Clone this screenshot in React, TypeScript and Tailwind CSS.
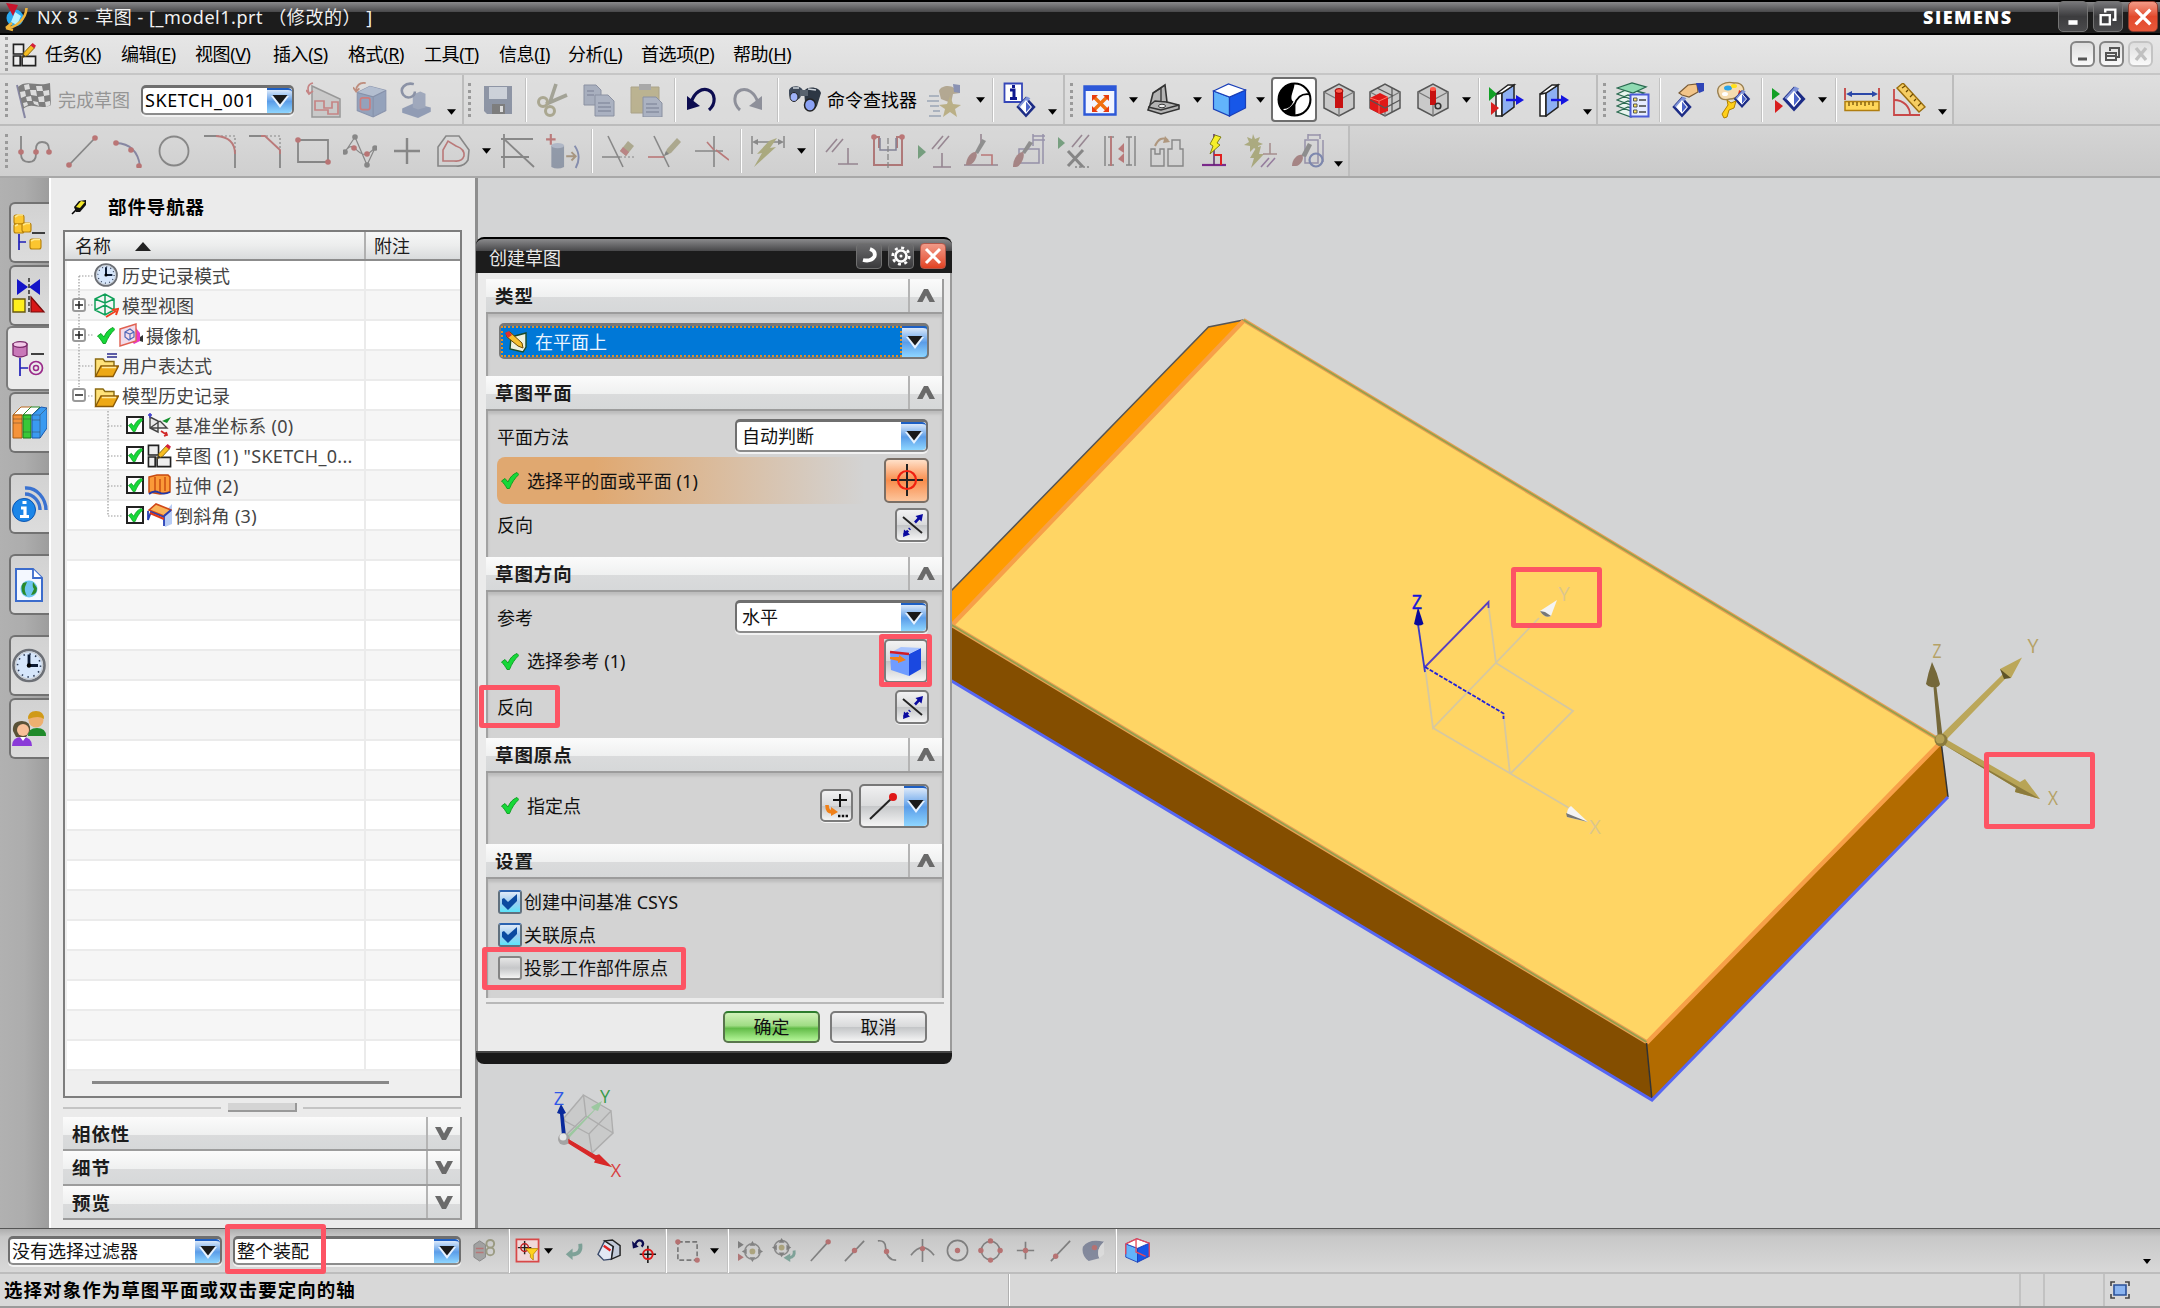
import React from 'react';

type Kids = { children?: React.ReactNode; className?: string };

/* ---------- shared primitives ---------- */

function Ico({ children, className = 'w-[34px] h-[34px]', box = '0 0 34 34' }: Kids & { box?: string }) {
  return (
    <svg viewBox={box} className={`shrink-0 ${className}`} fill="none" stroke="none">
      {children}
    </svg>
  );
}

function Cell({ w, children, dim }: { w: string; children?: React.ReactNode; dim?: boolean }) {
  return (
    <div className={`flex h-full shrink-0 items-center justify-center ${w} ${dim ? 'opacity-50' : ''}`}>{children}</div>
  );
}

function Grip({ w = 'w-[12px]' }: { w?: string }) {
  return (
    <div className={`flex h-full shrink-0 items-center justify-center ${w}`}>
      <div className="h-[34px] border-l-[3px] border-dotted border-[#9a9a9a]" />
    </div>
  );
}

function Sep({ w = 'w-[8px]' }: { w?: string }) {
  return (
    <div className={`flex h-full shrink-0 items-center justify-center ${w}`}>
      <div className="h-[44px] w-[2px] border-l border-[#c2c2c2] bg-white" />
    </div>
  );
}

function Arrow({ w = 'w-[20px]', low }: { w?: string; low?: boolean }) {
  return (
    <div className={`flex h-full shrink-0 justify-center ${low ? 'items-end pb-[9px]' : 'items-center'} ${w}`}>
      <svg viewBox="0 0 10 6" className="h-[6px] w-[9px]">
        <path d="M0 0H10L5 6Z" fill="#000" />
      </svg>
    </div>
  );
}

function DropBtn({ className = 'w-[25px]' }: { className?: string }) {
  return (
    <div
      className={`flex h-full shrink-0 items-center justify-center rounded-r-[4px] border-t-2 border-[#1d5fc4] bg-linear-to-b from-[#dbe8f8] via-[#5b9de8] to-[#8fd6ff] ${className}`}
    >
      <svg viewBox="0 0 18 13" className="h-[13px] w-[18px]">
        <path d="M0 1H18L9 13Z" fill="#e6f2ff" />
        <path d="M1.500 0H16.500L9 9.500Z" fill="#1a1a1a" />
      </svg>
    </div>
  );
}

function Combo({ text, className = '' }: { text: string; className?: string }) {
  return (
    <div
      className={`flex shrink-0 overflow-hidden rounded-[5px] border-2 border-t-[3px] border-[#6f6f6f] border-b-[#8c8c8c] bg-white shadow-[0_2px_0_#f2f2f2] ${className}`}
    >
      <div className="flex flex-1 items-center pl-[2px] whitespace-nowrap">{text}</div>
      <DropBtn />
    </div>
  );
}

/* ---------- reusable shapes ---------- */

const dot = (x: number, y: number, c = '#a01818', r = 2.8) => <circle cx={x} cy={y} r={r} fill={c} />;

function Clock({ className }: { className?: string }) {
  return (
    <Ico className={className} box="0 0 34 34">
      <circle cx="17" cy="17" r="15.500" fill="#d6e6fb" stroke="#6d7076" strokeWidth="2.600" />
      <circle cx="17" cy="17" r="13.500" stroke="#c9ccd0" strokeWidth="1.200" />
      <circle cx="17" cy="17" r="11.500" stroke="#2d3b55" strokeWidth="1.600" strokeDasharray="1.500 4.520" />
      <path d="M17 6V17H26" stroke="#0c1a33" strokeWidth="2.800" />
      <circle cx="17" cy="17" r="2.200" fill="#000" />
    </Ico>
  );
}

function SketchIcon({ className }: { className?: string }) {
  return (
    <Ico className={className} box="0 0 26 26">
      <g fill="#eee" stroke="#222" strokeWidth="1.700">
        <path d="M1.500 2.500H12V12.500H1.500Z M1.500 14.500H8.500V24.500H1.500Z M10.500 15H24.500V24.500H10.500Z" />
      </g>
      <path d="M11 16L12.500 11L20 3L23.500 6L16 14Z" fill="#f6bd22" stroke="#7c5a00" strokeWidth="0.900" />
      <path d="M19 3.500L21.500 1L25 4L23 6.500Z" fill="#d4213c" />
      <path d="M11 16L12 12.700L14.300 15Z" fill="#333" />
    </Ico>
  );
}

function Folder({ marks }: { marks?: boolean }) {
  return (
    <Ico className="h-[26px] w-[25px]" box="0 0 25 26">
      {marks && <path d="M13 2H23M13 5H23" stroke="#2a2a8c" strokeWidth="1.600" />}
      <path d="M1.500 24V7H9L11 9.500H20V14" fill="#ffe27a" stroke="#8a6a10" strokeWidth="1.400" />
      <path d="M1.500 24.500L7 14H24.500L19 24.500Z" fill="#eda815" stroke="#8a5a08" strokeWidth="1.400" />
      <path d="M8 15.500H22" stroke="#ffe9a0" strokeWidth="1.500" />
    </Ico>
  );
}

function Check({ className = 'w-[18px] h-[17px]' }: { className?: string }) {
  return (
    <svg viewBox="0 0 18 17" className={`shrink-0 ${className}`}>
      <path d="M0.500 9L4 6.500L7 10C9 5 12 2 16 0.500L17.800 2.500C13.500 6.500 11 10.500 8.500 16.500H6C4.500 13.500 2.500 11 0.500 9Z" fill="#16d838" stroke="#0a9a1e" strokeWidth="0.900" />
    </svg>
  );
}

function WireCube({ children }: Kids) {
  return (
    <Ico>
      <path d="M2 9L17 1L32 9V25L17 33L2 25Z" fill="#c9c9c9" stroke="#555" strokeWidth="1.500" />
      <path d="M2 9L17 17L32 9M17 17V33" stroke="#777" strokeWidth="1.300" />
      {children}
    </Ico>
  );
}

function BlueCube({ className, edges }: { className?: string; edges?: boolean }) {
  return (
    <Ico className={className}>
      <path d="M1 8L17 14V33L1 26Z" fill="#62b4fb" stroke="#1a3fb8" strokeWidth="1.200" />
      <path d="M17 14L33 7V25L17 33Z" fill="#1757e8" stroke="#1a3fb8" strokeWidth="1.200" />
      <path d="M1 8L16 1L33 7L17 14Z" fill="#fff" stroke="#1a3fb8" strokeWidth="1.200" />
      {edges && <path d="M1 8L16 1L33 7V25M15 1V19L28 25M1 8V22" stroke="#e84858" strokeWidth="1.800" />}
    </Ico>
  );
}

function Diamond({ x, y, s = 1 }: { x: number; y: number; s?: number }) {
  return (
    <g transform={`translate(${x} ${y}) scale(${s})`}>
      <path d="M-11 0L0 -12L11 0L0 12Z" fill="#1c2c86" />
      <path d="M-9 -1L1 -12L5 -10L-5 2Z" fill="#7f93d8" />
      <path d="M-6 0L0 -7V7Z" fill="#fff" />
      <path d="M6 0L0 -7V7Z" fill="#4a63c8" />
      <path d="M-6 0L0 -7L6 0L0 7Z" stroke="#fff" strokeWidth="1.200" />
    </g>
  );
}

/* ---------- title bar & menu ---------- */

function WinBtn({ red, children }: Kids & { red?: boolean }) {
  return (
    <div
      className={`flex h-[31px] w-[30px] items-center justify-center rounded-[5px] border ${
        red
          ? 'border-[#8c3a2c] bg-linear-to-b from-[#f39a86] via-[#e2492c] to-[#e8583a]'
          : 'border-[#747474] bg-linear-to-b from-[#77777a] via-[#3c3c3e] to-[#4a4a4c]'
      }`}
    >
      <svg viewBox="0 0 24 24" className="h-[22px] w-[22px]" fill="none" stroke="#fff" strokeWidth="3">
        {children}
      </svg>
    </div>
  );
}

function TitleBar() {
  return (
    <div className="flex h-[35px] items-center border-b-2 border-black bg-[linear-gradient(#000_0,#000_2px,#8a8a8c_2px,#48484a_12px,#1c1c1c_12px,#1c1c1c_100%)] text-[18px] leading-none text-[#f1f1f1]">
      <Ico className="ml-[4px] h-[32px] w-[25px]" box="0 0 25 32">
        <circle cx="11" cy="17" r="8.500" fill="#2aa9f0" />
        <path d="M11 11L17 15L13 24L7 21Z" fill="#b8f1ff" />
        <path d="M2 2L14 4L9 15Z" fill="#c8142c" />
        <path d="M2 27C12 27 22 18 22.500 7M2 27L8 22M2 27L9 29" stroke="#f0b43a" strokeWidth="2.600" />
      </Ico>
      <div className="ml-[8px] pt-px whitespace-pre tracking-[0.540px]">NX 8 - 草图 - [_model1.prt （修改的） ]</div>
      <div className="ml-auto mr-[42px] w-[93px] font-['Open_Sans'] text-[18px] font-extrabold tracking-[1.500px] text-white">SIEMENS</div>
      <div className="flex gap-[5px] pr-[2px]">
        <WinBtn>
          <path d="M7 18H17" strokeWidth="5" />
        </WinBtn>
        <WinBtn>
          <path d="M9 7V4H20V15H17M4 10H14V20H4Z" strokeWidth="2.600" />
        </WinBtn>
        <WinBtn red>
          <path d="M4 4L20 20M20 4L4 20" strokeWidth="3.600" />
        </WinBtn>
      </div>
    </div>
  );
}

const menus = [
  ['任务', 'K', 'w-[76px]'],
  ['编辑', 'E', 'w-[74px]'],
  ['视图', 'V', 'w-[78px]'],
  ['插入', 'S', 'w-[75px]'],
  ['格式', 'R', 'w-[76px]'],
  ['工具', 'T', 'w-[75px]'],
  ['信息', 'I', 'w-[69px]'],
  ['分析', 'L', 'w-[73px]'],
  ['首选项', 'P', 'w-[92px]'],
  ['帮助', 'H', 'w-[80px]'],
];

function MdiBtn({ dim, children }: Kids & { dim?: boolean }) {
  return (
    <div
      className={`flex h-[26px] w-[25px] items-center justify-center rounded-[6px] border-2 bg-linear-to-b from-[#dedede] to-[#fafafa] ${
        dim ? 'border-[#c4c4c4]' : 'border-[#848484]'
      }`}
    >
      <svg viewBox="0 0 20 20" className="h-[20px] w-[20px] shrink-0" fill="none" stroke={dim ? '#c0c0c0' : '#555'} strokeWidth="2">
        {children}
      </svg>
    </div>
  );
}

function MenuBar() {
  return (
    <div className="flex h-[40px] items-center border-b-2 border-[#c6c6c6] bg-linear-to-b from-[#e6e6e6] to-[#dedede] text-[18px] leading-none text-black">
      <Grip w="w-[12px]" />
      <SketchIcon className="h-[25px] w-[25px]" />
      <div className="ml-[8px] flex">
        {menus.map(([t, k, w]) => (
          <div key={k} className={`${w} whitespace-nowrap tracking-[-0.400px]`}>
            {t}(<span className="underline underline-offset-2">{k}</span>)
          </div>
        ))}
      </div>
      <div className="ml-auto flex gap-[4px] pr-[7px]">
        <MdiBtn>
          <path d="M5 15H14" strokeWidth="3" />
        </MdiBtn>
        <MdiBtn>
          <path d="M8 7V4H17V13H14M4 9H14V16H4ZM4 12H14" />
        </MdiBtn>
        <MdiBtn dim>
          <path d="M5 4L15 16M15 4L5 16" strokeWidth="3.400" />
        </MdiBtn>
      </div>
    </div>
  );
}

/* ---------- toolbar 1 ---------- */

function Toolbar1() {
  return (
    <div className="flex h-[51px] items-center border-b-2 border-[#bcbcbc] text-[18px] leading-none">
      <div className="flex h-full w-[464px] items-center border-r-2 border-[#bdbdbd] bg-[#dedede]/60">
        <Grip />
        <Cell w="w-[44px]" dim>
          <Ico className="h-[38px] w-[36px]" box="0 0 36 38">
            <path d="M1 4L9 37" stroke="#33336a" strokeWidth="2" />
            <path d="M2 6C10 -2 20 6 34 2L35 24C24 30 16 20 7 28Z" fill="#222" />
            <g fill="#ddd">
              <path d="M8 4L13 3L14 8L9 9ZM20 5L26 5L27 10L21 10ZM14 9L20 9L21 15L15 14ZM27 10L33 9L33.500 14L28 15ZM4 11L9 10L10 15L5 17ZM10 16L15 15L16 20L11 20ZM22 16L28 15L28.500 21L23 21ZM7 22L11 21L12 24L8 26ZM17 20L22 21L23 25L18 23ZM29 21L34 20L34.500 24L30 26Z" />
            </g>
          </Ico>
        </Cell>
        <div className="ml-[2px] w-[84px] whitespace-nowrap text-[#959595]">完成草图</div>
        <Combo text="SKETCH_001" className="h-[30px] w-[153px] text-[18px] tracking-[0.600px]" />
        <Cell w="w-[53px]" dim>
          <Ico className="ml-[7px] h-[36px] w-[36px]" box="0 0 36 36">
            <path d="M6 4L34 17V35H6Z" fill="#b8b8b8" stroke="#555" strokeWidth="1.500" />
            <path d="M9 19H18V26H26V20H32V32H22V28H9Z" stroke="#b03030" strokeWidth="1.700" />
            <path d="M7 1C2 2 1 6 3 11M0 8L3 12L7 9" stroke="#b03030" strokeWidth="1.700" />
          </Ico>
        </Cell>
        <Cell w="w-[47px]" dim>
          <Ico className="h-[36px] w-[36px]">
            <path d="M4 10L16 4L31 8V27L19 33L4 27Z" fill="#4f6a9c" stroke="#3b4f80" />
            <path d="M4 10L16 4L31 8L19 14Z" fill="#8ba0c4" />
            <path d="M4 10L19 14L31 8M19 14V33" stroke="#324878" />
            <rect x="7" y="15" width="9" height="11" rx="2" stroke="#c02020" strokeWidth="1.600" />
            <path d="M12 1C6 0 3 4 3 8M0 5L3 9L6 6" stroke="#a04020" strokeWidth="1.700" />
          </Ico>
        </Cell>
        <Cell w="w-[46px]" dim>
          <Ico className="h-[36px] w-[36px]">
            <path d="M3 25L14 20L30 24V28L18 34L3 29Z" fill="#4a5f8e" />
            <path d="M13 12L20 9L25 11V24L18 26L13 24Z" fill="#64769d" />
            <path d="M14 2C6 0 0 6 4 12C8 17 15 14 15 9" stroke="#3b4a70" strokeWidth="2.400" />
          </Ico>
        </Cell>
        <Arrow w="w-[22px]" low />
      </div>

      <div className="flex h-full w-[601px] items-center border-r-2 border-[#bdbdbd] bg-[#dedede]/60">
        <Grip w="w-[11px]" />
        <Cell w="w-[46px]" dim>
          <Ico className="h-[30px] w-[30px]" box="0 0 30 30">
            <path d="M1 1H29V29H4L1 26Z" fill="#41506f" />
            <path d="M6 2H24V14H6Z" fill="#bcc6d6" />
            <path d="M9 19H22V29H9Z" fill="#222" />
            <path d="M17 21H20V27H17Z" fill="#ddd" />
          </Ico>
        </Cell>
        <Sep w="w-[9px]" />
        <Cell w="w-[46px]" dim>
          <Ico>
            <path d="M20 1L14 19M31 12L10 21" stroke="#6a6a52" strokeWidth="3.600" />
            <circle cx="7" cy="19" r="4.500" stroke="#7a7448" strokeWidth="3" />
            <circle cx="14" cy="28" r="4.500" stroke="#7a7448" strokeWidth="3" />
          </Ico>
        </Cell>
        <Cell w="w-[46px]" dim>
          <Ico>
            <path d="M2 2H14L19 7V22H2Z" fill="#7482a0" stroke="#3c4868" />
            <path d="M13 12H26L32 18V33H13Z" fill="#7b89a8" stroke="#3c4868" />
            <path d="M16 20H28M16 24H29M16 28H29M5 8H12M5 12H12" stroke="#39456a" strokeWidth="1.500" />
          </Ico>
        </Cell>
        <Cell w="w-[48px]" dim>
          <Ico>
            <path d="M2 4H30V30H2Z" fill="#9b8a48" stroke="#7a6c38" />
            <path d="M10 1H22V7H10Z" fill="#777" />
            <path d="M14 14H27L33 20V34H14Z" fill="#7b89a8" stroke="#3c4868" />
            <path d="M17 21H28M17 25H30M17 29H30" stroke="#39456a" strokeWidth="1.500" />
          </Ico>
        </Cell>
        <Sep w="w-[10px]" />
        <Cell w="w-[42px]">
          <Ico className="h-[28px] w-[30px]" box="0 0 30 28">
            <path d="M5 17C8 6 16 2 22 4C30 7 30 18 23 24" stroke="#0c0c50" strokeWidth="3.200" />
            <path d="M1 10L14 20L1 24Z" fill="#0c0c50" />
          </Ico>
        </Cell>
        <Cell w="w-[52px]" dim>
          <Ico className="h-[28px] w-[30px]" box="0 0 30 28">
            <path d="M25 17C22 6 14 2 8 4C0 7 0 18 7 24" stroke="#42465a" strokeWidth="3" />
            <path d="M29 10L16 20L29 24Z" fill="#42465a" />
          </Ico>
        </Cell>
        <Sep />
        <Cell w="w-[45px]">
          <Ico className="h-[32px] w-[34px]" box="0 0 34 32">
            <path d="M1 6C4 0 14 2 15 7L12 14C8 18 1 15 1 10Z" fill="#3f4a5a" />
            <path d="M16 7C20 1 32 3 33 9L29 22C26 28 16 26 17 18Z" fill="#2d3744" />
            <path d="M12 6H20V12H12Z" fill="#59636f" />
            <ellipse cx="6" cy="13" rx="4" ry="4.500" fill="#9fb2f8" stroke="#222" />
            <ellipse cx="22" cy="21" rx="5.500" ry="6" fill="#8ba2f5" stroke="#222" strokeWidth="1.500" />
            <path d="M5 4L11 4M20 5L28 6" stroke="#d0d6dc" strokeWidth="1.500" />
          </Ico>
        </Cell>
        <div className="w-[90px] whitespace-nowrap text-black">命令查找器</div>
        <Cell w="w-[54px]" dim>
          <Ico>
            <path d="M12 8C14 2 24 2 27 5L32 2L33 10L26 11L24 20L14 16Z" fill="#8a744a" />
            <path d="M26 1L33 2V10L27 9Z" fill="#39498a" />
            <path d="M23 13L26 21L34 22L28 26L30 34L23 29L16 34L18 26L12 22L20 21Z" fill="#9a8534" />
            <path d="M2 13H12M0 18H12M3 23H12M6 28H13M2 33H14" stroke="#5c7290" strokeWidth="1.600" />
          </Ico>
        </Cell>
        <Arrow w="w-[18px]" />
        <Sep />
        <Cell w="w-[46px]">
          <Ico className="h-[36px] w-[34px]" box="0 0 34 36">
            <path d="M1.500 1.500H19V20H1.500Z" fill="#fff" stroke="#3647b8" strokeWidth="1.800" />
            <path d="M7 8H11V16M7 16.500H14M9 4.500H12" stroke="#101a90" strokeWidth="3" />
            <Diamond x={23} y={25} s={0.88} />
          </Ico>
        </Cell>
        <Arrow w="w-[18px]" low />
      </div>

      <div className="flex h-full w-[533px] items-center border-r-2 border-[#bdbdbd] bg-[#dedede]/60">
        <Grip />
        <Cell w="w-[46px]">
          <Ico>
            <path d="M1.500 3.500H32.500V31.500H1.500Z" fill="#f2f5ff" stroke="#2d58d8" strokeWidth="2.400" />
            <path d="M1.500 3H32.500V8H1.500Z" fill="#2d58d8" />
            <path d="M11 14L24 27M24 14L11 27" stroke="#f07010" strokeWidth="3.500" />
            <path d="M9 12H15L9 18ZM26 12H20L26 18ZM9 29H15L9 23ZM26 29H20L26 23Z" fill="#e83c10" />
          </Ico>
        </Cell>
        <Arrow w="w-[20px]" />
        <Cell w="w-[42px]">
          <Ico>
            <path d="M3 22L6 10L18 2L20 19L32 22V26L14 31L1 27Z" fill="#b4b4b4" stroke="#333" strokeWidth="1.600" />
            <path d="M3 22L8 18L20 19M6 10L14 5V18M1 24L14 27L32 22" stroke="#333" strokeWidth="1.300" />
            <ellipse cx="15" cy="23" rx="3.500" ry="1.800" fill="#eee" stroke="#333" />
          </Ico>
        </Cell>
        <Arrow w="w-[24px]" />
        <Cell w="w-[40px]">
          <BlueCube className="h-[34px] w-[35px]" />
        </Cell>
        <Arrow w="w-[22px]" />
        <Cell w="w-[46px]">
          <div className="flex h-[45px] w-[46px] items-center justify-center rounded-[4px] border-2 border-[#6e6e6e] bg-white">
            <Ico className="h-[35px] w-[35px]">
              <circle cx="17" cy="17" r="15.500" fill="#fff" stroke="#000" strokeWidth="2" />
              <path d="M17 1.500A15.500 15.500 0 0 0 4 26C10 27 14 24 16 19C11 16 17 8 17 1.500Z" fill="#000" />
              <path d="M17 32.500V22C20 13 26 11 32 12" stroke="#000" strokeWidth="1.800" />
              <path d="M17 32.500V20C10 28 8 28 5 27Q9 32.500 17 32.500Z" fill="#000" />
            </Ico>
          </div>
        </Cell>
        <Cell w="w-[44px]">
          <WireCube>
            <path d="M13 8V25H21V8Z" fill="#c81010" />
            <ellipse cx="17" cy="8" rx="4" ry="2.400" fill="#ff5a4a" stroke="#900" />
          </WireCube>
        </Cell>
        <Cell w="w-[48px]">
          <WireCube>
            <path d="M2 15L12 10L20 14V28L12 31L2 26Z" fill="#e01818" />
            <path d="M2 15L11 18L20 14M11 18V31" stroke="#ff7060" />
            <path d="M24 5V29M9 5L25 13M2 17L17 25L32 17" stroke="#555" strokeWidth="1.200" />
          </WireCube>
        </Cell>
        <Cell w="w-[48px]">
          <WireCube>
            <path d="M14 6V22H20V6Z" fill="#c81010" />
            <ellipse cx="17" cy="6" rx="3" ry="2" fill="#ff5a4a" />
            <circle cx="22" cy="23" r="2.800" stroke="#333" strokeWidth="1.600" />
          </WireCube>
        </Cell>
        <Arrow w="w-[18px]" />
        <Sep />
        <Cell w="w-[46px]">
          <Ico className="h-[34px] w-[37px]" box="0 0 37 34">
            <path d="M8 11L14 10V33H8Z" fill="#fff" stroke="#222" strokeWidth="1.500" />
            <path d="M14 10L26 2V24L14 33Z" fill="#8eb0f2" stroke="#222" strokeWidth="1.500" />
            <path d="M8 11L20 2H26L14 10Z" fill="#fff" stroke="#222" strokeWidth="1.500" />
            <path d="M1 4L9 11L1 18Z" fill="#12a026" />
            <path d="M3 19L11 25L3 32Z" fill="#d81e1e" />
            <path d="M18 17H29" stroke="#1414e0" strokeWidth="2.400" />
            <path d="M28 12L36 17L28 22Z" fill="#1414e0" />
          </Ico>
        </Cell>
        <Cell w="w-[50px]">
          <Ico className="h-[34px] w-[32px]" box="0 0 32 34">
            <path d="M2 11L8 10V33H2Z" fill="#fff" stroke="#222" strokeWidth="1.500" />
            <path d="M8 10L20 2V24L8 33Z" fill="#8eb0f2" stroke="#222" strokeWidth="1.500" />
            <path d="M2 11L14 2H20L8 10Z" fill="#fff" stroke="#222" strokeWidth="1.500" />
            <path d="M13 17H24" stroke="#1414e0" strokeWidth="2.400" />
            <path d="M23 12L31 17L23 22Z" fill="#1414e0" />
          </Ico>
        </Cell>
        <Arrow w="w-[17px]" low />
      </div>

      <div className="flex h-full w-[356px] items-center border-r-2 border-[#bdbdbd] bg-[#dedede]/60">
        <Grip />
        <Cell w="w-[46px]">
          <Ico className="h-[36px] w-[34px]" box="0 0 34 36">
            <g fill="#e8f4ee" stroke="#2a6a50" strokeWidth="1.300">
              <path d="M1 30L12 25L28 29L15 35ZM1 24L12 19L28 23L15 29ZM1 18L12 13L28 17L15 23ZM1 12L12 7L28 11L15 17Z" />
              <path d="M1 6L16 1L30 5L17 11Z" fill="#8fdab2" />
            </g>
            <path d="M14.500 12.500H32.500V34.500H14.500Z" fill="#e6ecff" stroke="#4c5cd8" strokeWidth="2" />
            <path d="M17.500 16H21V19H17.500ZM17.500 22H21V25H17.500ZM17.500 28H21V31H17.500Z" fill="#ffe65a" stroke="#555" />
            <path d="M23 18H30M23 24H30M23 30H30" stroke="#444" strokeWidth="1.700" />
          </Ico>
        </Cell>
        <Sep />
        <Cell w="w-[47px]">
          <Ico className="h-[36px] w-[35px]" box="0 0 35 36">
            <Diamond x={12} y={25} s={0.88} />
            <path d="M9 11L18 3L27 2L28 10L19 15L12 13Z" fill="#f2c58a" stroke="#7a5a34" strokeWidth="1.200" />
            <path d="M26 1L34 1L34 9L29 11Z" fill="#2f45b8" />
          </Ico>
        </Cell>
        <Cell w="w-[46px]">
          <Ico className="h-[38px] w-[36px]" box="0 0 36 38">
            <path d="M2 12C0 4 10 0 18 2C26 1 30 8 26 12C22 15 20 18 14 18C6 20 3 17 2 12Z" fill="#f6dcb0" stroke="#9a8050" strokeWidth="1.400" />
            <ellipse cx="12" cy="7" rx="4" ry="2.500" fill="#2aa4e8" />
            <ellipse cx="18" cy="5" rx="3" ry="2" fill="#ffe11a" />
            <ellipse cx="9" cy="13" rx="3" ry="2" fill="#fff" />
            <path d="M23 9L28 12L22 14Z" fill="#e02818" />
            <Diamond x={26} y={18} s={0.75} />
            <path d="M8 37L6 33L12 24L11 19L15 22L20 20L18 27L13 29L11 36Z" fill="#ffcf1a" stroke="#b08000" />
          </Ico>
        </Cell>
        <Sep w="w-[10px]" />
        <Cell w="w-[44px]">
          <Ico className="h-[28px] w-[36px]" box="0 0 36 28">
            <path d="M1 2L9 8L1 14Z" fill="#12a026" />
            <path d="M4 14L12 20L4 27Z" fill="#d81e1e" />
            <Diamond x={23} y={13} s={1.05} />
          </Ico>
        </Cell>
        <Arrow w="w-[22px]" />
        <Sep w="w-[6px]" />
        <Cell w="w-[46px]">
          <Ico className="h-[24px] w-[36px]" box="0 0 36 24">
            <path d="M1 0V12M35 0V12" stroke="#c03030" strokeWidth="1.600" />
            <path d="M4 6H32" stroke="#2c48a8" strokeWidth="2" />
            <path d="M2 6L8 3V9ZM34 6L28 3V9Z" fill="#2c48a8" />
            <path d="M1 13.500H35V22.500H1Z" fill="#ffd75a" stroke="#b07e10" strokeWidth="1.500" />
            <path d="M5 14V18M9 14V17M13 14V18M17 14V17M21 14V18M25 14V17M29 14V18" stroke="#6a4800" strokeWidth="1.200" />
          </Ico>
        </Cell>
        <Cell w="w-[48px]">
          <Ico>
            <path d="M2 6V32H28" stroke="#c84848" strokeWidth="1.800" />
            <path d="M2 17C12 17 18 24 18 32" stroke="#c84848" strokeWidth="1.800" />
            <path d="M5 5L11 0L33 24L27 29Z" fill="#f5cd62" stroke="#9a6e10" strokeWidth="1.400" />
            <path d="M10 5L13 3M14 9L16 7M18 14L21 11M22 18L24 16M26 23L29 20" stroke="#6a4800" strokeWidth="1.200" />
          </Ico>
        </Cell>
        <Arrow w="w-[18px]" low />
      </div>
    </div>
  );
}

/* ---------- toolbar 2 ---------- */

const g = '#3c3c3c';

function Toolbar2() {
  return (
    <div className="flex h-[50px] items-center">
      <div className="flex h-full w-[1350px] items-center border-r-2 border-[#bdbdbd] bg-white/10">
        <Grip />
        <Cell w="w-[46px]" dim>
          <Ico>
            <path d="M3 2V20Q3 28 11 28Q18 28 18 20V15Q18 8 24 8Q31 8 31 15V18" stroke={g} strokeWidth="1.800" />
            {dot(3, 18)}{dot(18, 18)}{dot(31, 18)}
          </Ico>
        </Cell>
        <Cell w="w-[47px]" dim>
          <Ico>
            <path d="M4 31L30 4" stroke={g} strokeWidth="1.800" />
            {dot(4, 31)}{dot(30, 4)}
          </Ico>
        </Cell>
        <Cell w="w-[45px]" dim>
          <Ico>
            <path d="M5 9Q26 10 29 32" stroke="#3a3a70" strokeWidth="1.800" />
            {dot(5, 9)}{dot(20, 16)}{dot(28, 32)}
          </Ico>
        </Cell>
        <Cell w="w-[48px]" dim>
          <Ico>
            <circle cx="17" cy="17" r="14.500" stroke={g} strokeWidth="1.800" />
          </Ico>
        </Cell>
        <Cell w="w-[43px]" dim>
          <Ico>
            <path d="M14 2H32V16" stroke={g} strokeWidth="1.200" strokeDasharray="2 2" />
            <path d="M1 2H14M32 16V34" stroke={g} strokeWidth="1.800" />
            <path d="M13 2Q32 3 32 20" stroke="#a02020" strokeWidth="1.800" />
          </Ico>
        </Cell>
        <Cell w="w-[48px]" dim>
          <Ico>
            <path d="M14 2H32V16" stroke={g} strokeWidth="1.200" strokeDasharray="2 2" />
            <path d="M1 2H14M32 16V34" stroke={g} strokeWidth="1.800" />
            <path d="M13 2H17L32 16V20" stroke="#a02020" strokeWidth="1.800" />
          </Ico>
        </Cell>
        <Cell w="w-[48px]" dim>
          <Ico className="h-[30px] w-[36px]" box="0 0 36 30">
            <path d="M3 4H33V26H3Z" stroke={g} strokeWidth="1.800" />
            {dot(3, 4)}{dot(33, 26)}
          </Ico>
        </Cell>
        <Cell w="w-[46px]" dim>
          <Ico>
            <path d="M2 18Q6 10 12 14Q18 22 25 20L32 14M12 3L2 18M12 3L24 31L32 14" stroke={g} strokeWidth="1.200" />
            {dot(12, 3, g)}{dot(2, 18, g)}{dot(32, 14, g)}{dot(24, 31, g)}{dot(11, 14)}{dot(24, 20)}
          </Ico>
        </Cell>
        <Cell w="w-[48px]" dim>
          <Ico>
            <path d="M4 17H30M17 4V30" stroke={g} strokeWidth="2.400" />
          </Ico>
        </Cell>
        <Cell w="w-[44px]" dim>
          <Ico>
            <path d="M2 32V13L10 2H23L33 16L32 26Q28 33 20 32Z" stroke={g} strokeWidth="1.600" />
            <path d="M7 27V16L12 7L20 12Q29 15 28 22Q26 28 18 27Z" stroke="#a02020" strokeWidth="1.600" />
          </Ico>
        </Cell>
        <Arrow w="w-[23px]" />
        <Cell w="w-[40px]" dim>
          <Ico>
            <path d="M3 0V34M0 5H32M0 23H28M3 5L33 33" stroke={g} strokeWidth="1.800" />
          </Ico>
        </Cell>
        <Cell w="w-[50px]" dim>
          <Ico className="h-[36px] w-[36px]">
            <path d="M6 12H18V32Q12 35 6 32Z" fill="#51617f" />
            <ellipse cx="12" cy="12" rx="6" ry="2.500" fill="#8b9ab8" />
            <path d="M1 6H10M5.500 1V11" stroke="#a02020" strokeWidth="2" />
            <path d="M20 22H28M25 18L29 22L25 26" stroke="#7c5a30" strokeWidth="1.800" />
            <path d="M28 12Q35 22 29 33" stroke="#3a4a8a" strokeWidth="1.800" />
          </Ico>
        </Cell>
        <Sep />
        <Cell w="w-[46px]" dim>
          <Ico>
            <path d="M6 2L21 33M0 23H18" stroke={g} strokeWidth="1.600" />
            <path d="M18 23H34" stroke={g} strokeDasharray="2 2" />
            <path d="M18 17L26 7L32 12L24 22Z" fill="#837c4a" />
            <path d="M18 17L21 13L27 18L24 22Z" fill="#a03838" />
          </Ico>
        </Cell>
        <Cell w="w-[46px]" dim>
          <Ico>
            <path d="M6 2L21 33" stroke={g} strokeWidth="1.600" />
            <path d="M0 23H16" stroke="#a02020" strokeWidth="1.600" />
            <path d="M16 22L19 15L29 4L33 8L23 19Z" fill="#837c4a" />
            <path d="M16 22L18 17L21 20Z" fill="#333" />
          </Ico>
        </Cell>
        <Cell w="w-[48px]" dim>
          <Ico>
            <path d="M19 2V33M0 17H28" stroke={g} strokeWidth="1.600" />
            <path d="M12 8L19 16M21 16L34 26" stroke="#a02020" strokeWidth="1.600" />
          </Ico>
        </Cell>
        <Sep w="w-[10px]" />
        <Cell w="w-[44px]" dim>
          <Ico>
            <path d="M1 2V20M33 2V14M3 8H31" stroke={g} strokeWidth="1.500" />
            <path d="M1 8L7 5V11ZM33 8L27 5V11Z" fill={g} />
            <path d="M18 7L26 4L19 14L25 13L3 33L11 19L6 20Z" fill="#82802c" />
          </Ico>
        </Cell>
        <Arrow w="w-[23px]" />
        <Sep w="w-[4px]" />
        <Cell w="w-[48px]" dim>
          <Ico>
            <path d="M2 18L13 5M8 18L19 5M24 14V30M14 30H34" stroke="#5a3a50" strokeWidth="1.600" />
          </Ico>
        </Cell>
        <Cell w="w-[46px]" dim>
          <Ico>
            <path d="M3 3H8V14M26 14V3H31V31H3V3" stroke="#8c2020" strokeWidth="2" />
            <path d="M9 4V16H25V4" stroke="#33335a" strokeWidth="1.500" />
            <path d="M17 4V34" stroke={g} strokeDasharray="6 2" strokeWidth="1.300" />
            {dot(3, 3)}{dot(31, 3)}
          </Ico>
        </Cell>
        <Cell w="w-[46px]" dim>
          <Ico>
            <path d="M1 11L9 18L1 25Z" fill="#1b6a2c" />
            <path d="M15 15L26 2M21 15L32 2M25 19V33M16 33H34" stroke="#5a3a50" strokeWidth="1.600" />
          </Ico>
        </Cell>
        <Cell w="w-[48px]" dim>
          <Ico>
            <path d="M0 31H34M17 0V12" stroke="#5a3a50" strokeWidth="1.600" />
            <path d="M17 21H28V31" stroke="#a02020" strokeWidth="1.600" />
            <path d="M11 18L18 5L22 7L14 20Z" fill="#4a4a4a" />
            <path d="M2 31C2 23 8 17 12 18C15 22 9 31 5 31Z" fill="#7a3a3a" />
          </Ico>
        </Cell>
        <Cell w="w-[46px]" dim>
          <Ico>
            <path d="M8 15V29H28V15ZM22 2H34M22 6H34M22 0V12M32 0V30" stroke="#5a5080" strokeWidth="1.500" />
            <path d="M11 18L18 7L22 9L14 20Z" fill="#4a4a4a" />
            <path d="M2 33C2 25 7 18 12 18C15 22 9 33 5 33Z" fill="#7a3a3a" />
          </Ico>
        </Cell>
        <Cell w="w-[46px]" dim>
          <Ico>
            <path d="M1 3L8 9L1 15Z" fill="#1b6a2c" />
            <path d="M15 13L25 1M22 13L32 1" stroke="#5a3a50" strokeWidth="1.600" />
            <path d="M11 17L26 33M26 16L11 32" stroke={g} strokeWidth="3" />
            <path d="M18 33H34" stroke={g} strokeDasharray="2 2" strokeWidth="1.600" />
          </Ico>
        </Cell>
        <Cell w="w-[47px]" dim>
          <Ico>
            <path d="M1 2V32M31 2V32M7 3V31M25 3V31M4 3H10M4 31H10M22 3H28M22 31H28" stroke={g} strokeWidth="1.500" />
            <path d="M7 2V32" stroke="#a02020" strokeWidth="1.800" />
            <path d="M20 9L14 15L20 19ZM20 19L14 25L20 29Z" fill="#a02020" />
          </Ico>
        </Cell>
        <Cell w="w-[46px]" dim>
          <Ico>
            <path d="M1 15V32H14V15H10V20H5V15ZM18 15V32H33V15H30V6H22V15Z" stroke={g} strokeWidth="1.400" />
            <path d="M5 12Q10 1 18 6" stroke="#8a5a28" strokeWidth="2" />
            <path d="M15 2L20 8L13 9Z" fill="#8a5a28" />
          </Ico>
        </Cell>
        <Cell w="w-[48px]">
          <Ico>
            <path d="M5 31H29" stroke="#7a2a8a" strokeWidth="2.200" />
            <path d="M17 0V31" stroke="#5a2a6a" strokeWidth="1.500" />
            <path d="M17 21H24V31" stroke="#e02020" strokeWidth="2" />
            <path d="M18 1L24 3L20 9L23 11L13 20L16 12L13 10Z" fill="#f6ee2a" stroke="#77770a" strokeWidth="0.900" />
          </Ico>
        </Cell>
        <Cell w="w-[46px]" dim>
          <Ico>
            <path d="M9 0L11 5L16 3L14 8L19 10L14 12L15 17L10 14L6 18L6 12L0 11L5 8L3 3L8 5Z" fill="#82802c" />
            <path d="M12 14L17 12L15 20L20 20L7 34L10 24L6 24Z" fill="#82802c" />
            <path d="M26 9V20M19 20H33" stroke="#7a4a4a" strokeWidth="1.600" />
            <path d="M17 33L25 24M23 33L31 24" stroke="#5a2a6a" strokeWidth="1.600" />
          </Ico>
        </Cell>
        <Cell w="w-[48px]" dim>
          <Ico>
            <path d="M14 6V29H27V6ZM17 1H29M32 6V28M17 0V5M29 0V5" stroke="#5a5080" strokeWidth="1.500" />
            <path d="M10 22L17 9L21 11L15 23Z" fill="#4a4a4a" />
            <path d="M1 32C1 25 7 20 11 21C14 25 9 32 5 32Z" fill="#7a3a3a" />
            <circle cx="25" cy="26" r="6.500" stroke="#2b3f8a" strokeWidth="2.200" />
          </Ico>
        </Cell>
        <Arrow w="w-[13px]" low />
      </div>
    </div>
  );
}

/* ---------- resource tabs ---------- */

function Tab({ mt, active, children }: Kids & { mt: string; active?: boolean }) {
  return (
    <div
      className={`flex shrink-0 items-center justify-center rounded-l-[6px] border-2 border-r-0 pr-[2px] ${mt} ${
        active
          ? 'h-[65px] w-[43px] border-[#7b7b7b] bg-[#ebebeb]'
          : 'h-[61px] w-[40px] border-[#727272] bg-linear-to-b from-[#d2d2d2] to-[#dcdcdc]'
      }`}
    >
      {children}
    </div>
  );
}

function Tabs() {
  return (
    <div className="flex w-[49px] shrink-0 flex-col items-end bg-linear-to-r from-[#b1b1b1] via-[#adadad] to-[#9d9d9d]">
      <Tab mt="mt-[24px]">
        <Ico className="h-[38px] w-[34px]" box="0 0 34 38">
          <g fill="#fcc630" stroke="#b5800a" strokeWidth="1.100">
            <rect x="2" y="1" width="10" height="9" rx="2" />
            <rect x="2" y="10" width="10" height="9" rx="2" />
            <rect x="10" y="9" width="9" height="9" rx="2" />
            <rect x="18" y="25" width="11" height="10" rx="2" />
          </g>
          <path d="M3 3L6 1H11M3 12L6 10.500M11 11L14 9.500H18M19 27L22 25.500H28" stroke="#ffe88a" strokeWidth="1.600" />
          <path d="M7 20V36M7 28H14" stroke="#2020b8" strokeWidth="1.700" />
          <path d="M20 19H33" stroke="#222" strokeWidth="1.700" />
        </Ico>
      </Tab>
      <Tab mt="mt-[2px]">
        <Ico className="h-[38px] w-[34px]" box="0 0 34 38">
          <path d="M5 2L16 10L5 18ZM28 2L17 10L28 18Z" fill="#1414c8" />
          <path d="M17 1V37" stroke="#222" strokeWidth="1.400" strokeDasharray="4 2" />
          <path d="M1 22H13V35H1Z" fill="#ffef1e" stroke="#6a5a10" strokeWidth="1.400" />
          <path d="M19 20L32 35H19Z" fill="#d81818" stroke="#7a0a0a" strokeWidth="1.200" />
        </Ico>
      </Tab>
      <Tab mt="mt-0" active>
        <Ico className="h-[38px] w-[36px]" box="0 0 36 38">
          <path d="M3 4V15Q10 19 17 15V4Z" fill="#c878b8" stroke="#7a2a6a" strokeWidth="1.300" />
          <ellipse cx="10" cy="4.500" rx="7" ry="2.800" fill="#f2c8e8" stroke="#7a2a6a" strokeWidth="1.300" />
          <path d="M10 18V36M10 28H18" stroke="#2020b8" strokeWidth="1.700" />
          <path d="M21 14H34" stroke="#222" strokeWidth="1.700" />
          <circle cx="26" cy="28" r="6.500" stroke="#9a2a8a" strokeWidth="1.700" />
          <circle cx="26" cy="28" r="2.500" stroke="#9a2a8a" strokeWidth="1.500" />
        </Ico>
      </Tab>
      <Tab mt="mt-[1px]">
        <Ico className="h-[34px] w-[35px]" box="0 0 35 34">
          <path d="M1 9L9 1H20L12 9Z" fill="#fff" stroke="#b86a20" />
          <path d="M1 9H10V32H1Z" fill="#f5933a" stroke="#a85a10" />
          <path d="M11 9L19 1H28L20 9Z" fill="#fff" stroke="#2a8a2a" />
          <path d="M11 9H19V32H11Z" fill="#38c838" stroke="#1a7a1a" />
          <path d="M20 9L29 1L35 2V22L28 32H20Z" fill="#3a9af0" stroke="#1a5ab0" />
          <path d="M28 9V32M1 13H10M1 17H10M11 13H19M11 26H19M20 14H28M20 26H28M20 9H28L35 2" stroke="#333" strokeOpacity="0.400" />
        </Ico>
      </Tab>
      <Tab mt="mt-[20px]">
        <Ico className="h-[38px] w-[37px]" box="0 0 37 38">
          <path d="M14 3C26 2 35 14 35 25M14 9C23 9 29 17 29 25M14 15C19 15 23 20 23 26" stroke="#3a72d0" strokeWidth="3.400" />
          <circle cx="13" cy="25" r="11.500" fill="#1c86e8" stroke="#0d55b0" />
          <path d="M11.500 17.500H15.500M10 23H14V31M9 31.500H18" stroke="#fff" strokeWidth="3.200" />
        </Ico>
      </Tab>
      <Tab mt="mt-[20px]">
        <Ico className="h-[36px] w-[30px]" box="0 0 30 36">
          <path d="M2 2H19L28 11V34H2Z" fill="#f4f8ff" stroke="#3c6ccc" strokeWidth="2" />
          <path d="M19 2V11H28" fill="#fff" stroke="#3c6ccc" strokeWidth="1.800" />
          <circle cx="15" cy="22" r="8.500" fill="#6ec4f0" />
          <path d="M9 16Q6 21 9 27L13 29Q10 24 11 20L13 15ZM19 15Q18 20 20 22L17 28Q23 28 23 21Z" fill="#2a8a2a" />
        </Ico>
      </Tab>
      <Tab mt="mt-[20px]">
        <Clock className="h-[35px] w-[34px]" />
      </Tab>
      <Tab mt="mt-[2px]">
        <Ico className="h-[38px] w-[36px]" box="0 0 36 38">
          <path d="M17 26Q17 18 26 18Q35 18 35 26Z" fill="#1f8a2a" />
          <circle cx="25" cy="10" r="7.500" fill="#eeb070" />
          <path d="M17 9Q17 1 25 1Q33 1 33 9Q28 5 17 9Z" fill="#d09a18" />
          <path d="M2 21Q1 11 11 11Q20 11 19 21L15 27H5Z" fill="#5a5238" />
          <path d="M1 36Q1 27 11 27Q21 27 21 36Z" fill="#8a3ad8" />
          <circle cx="12" cy="20" r="6" fill="#f8c098" />
          <path d="M9 27L12 31L15 27Z" fill="#fff" />
        </Ico>
      </Tab>
    </div>
  );
}

/* ---------- part navigator ---------- */

function Toggle({ minus }: { minus?: boolean }) {
  return (
    <div className="relative z-10 flex h-[14px] w-[14px] shrink-0 items-center justify-center rounded-[3px] border-2 border-[#9a9a9a] bg-white">
      <svg viewBox="0 0 8 8" className="h-[8px] w-[8px] shrink-0" stroke="#222" strokeWidth="1.500">
        <path d={minus ? 'M0 4H8' : 'M0 4H8M4 0V8'} />
      </svg>
    </div>
  );
}

function TreeBox() {
  return (
    <div className="mr-[3px] flex h-[18px] w-[18px] shrink-0 items-center justify-center border-2 border-[#222] bg-white">
      <Check className="h-[14px] w-[15px]" />
    </div>
  );
}

function ViewIcon() {
  return (
    <Ico className="h-[25px] w-[25px]" box="0 0 25 25">
      <path d="M1 6L11 1L20 6V17L11 22L1 17ZM1 6L11 10L20 6M11 10V22M1 17L11 12L20 17M11 1V12" stroke="#10a058" strokeWidth="1.500" />
      <path d="M12 24L22 18M18 17L24 16L22 22" stroke="#f04020" strokeWidth="2" />
    </Ico>
  );
}
function CameraIcon() {
  return (
    <Ico className="h-[24px] w-[25px]" box="0 0 25 24">
      <path d="M18 5L22 10V18L16 21L9 13Z" fill="#e838c8" />
      <path d="M22 14L25 12V19L22 18Z" fill="#333" />
      <path d="M2 6L18 1V18L2 23Z" fill="#f2dcea" stroke="#e06050" strokeWidth="1.400" />
      <path d="M7 9L12 6L16 9V14L11 17L7 14ZM7 9L12 11L16 9M12 11V17" stroke="#5068b8" strokeWidth="1.200" />
    </Ico>
  );
}
function CsysIcon() {
  return (
    <Ico className="h-[24px] w-[25px]" box="0 0 25 24">
      <path d="M3 4V15L11 19V8ZM3 15L13 8M3 15L20 15L13 8" stroke="#444" strokeWidth="1.400" fill="#ddd" fillOpacity="0.500" />
      <path d="M3 0V5M1 2H5" stroke="#3838c8" strokeWidth="1.400" />
      <path d="M15 8L24 4L20 10Z" fill="#12902c" />
      <path d="M14 18L20 22M17 23L20 22L19 19" stroke="#d02828" strokeWidth="1.800" />
    </Ico>
  );
}
function ExtrudeIcon() {
  return (
    <Ico className="h-[22px] w-[25px]" box="0 0 25 22">
      <path d="M2 3L10 1H21L23 3V18L13 20L2 18Z" fill="#fb9a38" stroke="#c84a10" strokeWidth="1.500" />
      <path d="M8 3V17M13 5V19M18 3V17" stroke="#c84a10" strokeWidth="1.400" />
      <path d="M2 20Q7 16 12 18.500Q17 21 23 18" stroke="#2038a8" strokeWidth="1.900" />
    </Ico>
  );
}
function ChamferIcon() {
  return (
    <Ico className="h-[24px] w-[25px]" box="0 0 25 24">
      <path d="M15 12L25 1V21L18 24Z" fill="#b8ccf4" />
      <path d="M2 7L9 1L24 7L17 13Z" fill="#f9b458" stroke="#d04818" strokeWidth="1.600" />
      <path d="M1 8V17L4 9L17 14V23M17 13L24 7" stroke="#2640b8" strokeWidth="1.800" />
      <path d="M3 10L17 16" stroke="#e03818" strokeWidth="2.400" />
    </Ico>
  );
}

const topRows: { pre: React.ReactNode; icon: React.ReactNode; text: string }[] = [
  { pre: <div className="w-[14px]" />, icon: <Clock className="mr-[1px] h-[24px] w-[24px]" />, text: '历史记录模式' },
  { pre: <Toggle />, icon: <ViewIcon />, text: '模型视图' },
  {
    pre: <Toggle />,
    icon: (
      <div className="flex items-center pl-[3px]">
        <Check />
        <div className="ml-[3px]">
          <CameraIcon />
        </div>
      </div>
    ),
    text: '摄像机',
  },
  { pre: <div className="w-[14px]" />, icon: <Folder marks />, text: '用户表达式' },
  { pre: <Toggle minus />, icon: <Folder />, text: '模型历史记录' },
];

const childRows: [React.ReactNode, string][] = [
  [<CsysIcon key="c" />, '基准坐标系 (0)'],
  [<SketchIcon key="s" className="h-[25px] w-[25px]" />, '草图 (1) "SKETCH_0...'],
  [<ExtrudeIcon key="e" />, '拉伸 (2)'],
  [<ChamferIcon key="h" />, '倒斜角 (3)'],
];

function Row({ i, children }: Kids & { i: number }) {
  return (
    <div className={`flex h-[30px] shrink-0 border-b-2 border-[#ebebeb] ${i % 2 ? 'bg-[#f6f6f6]' : 'bg-white'}`}>
      <div className="flex w-[299px] items-center overflow-visible border-r-2 border-[#ebebeb] whitespace-nowrap">{children}</div>
    </div>
  );
}

function SectionHead({ text, up, className = 'h-[34px]' }: { text: string; up?: boolean; className?: string }) {
  return (
    <div
      className={`flex shrink-0 border-b-2 border-r-2 border-[#9c9c9c] bg-[linear-gradient(#fbfbfb_0%,#eff0f0_55%,#dadbdc_56%,#d6d8d9_100%)] ${className}`}
    >
      <div className="flex flex-1 items-center pl-[9px] pt-[2px] text-[18.500px] font-bold tracking-[0.900px] text-[#1c1c1c]">{text}</div>
      <div className="flex w-[34px] items-center justify-center border-l-2 border-[#b4b4b4]">
        <svg viewBox="0 0 18 13" className={`h-[13px] w-[18px] ${up ? '' : 'rotate-180'}`}>
          <path d="M0 13L7 0H11L18 13H12.500L9 6.500L5.500 13Z" fill="#6a6a6a" />
        </svg>
      </div>
    </div>
  );
}

function Navigator() {
  return (
    <div className="flex w-[429px] shrink-0 flex-col border-r-[3px] border-l-2 border-r-[#8e8e8e] border-l-white bg-[#ebebeb] pl-[12px] pr-[14px] text-[18px] leading-none">
      <div className="flex h-[52px] items-center pl-[8px] pt-[6px]">
        <Ico className="h-[16px] w-[17px]" box="0 0 17 16">
          <path d="M1 15L5 11" stroke="#000" strokeWidth="1.600" />
          <path d="M3 8L8 2L15 1L15 6L9 13H5Z" fill="#111" />
          <path d="M5 8L10 2L14 3L9 9Z" fill="#f4e82a" />
        </Ico>
        <div className="ml-[20px] text-[18.500px] font-bold tracking-[0.900px] text-black">部件导航器</div>
      </div>
      <div className="flex h-[868px] w-[399px] shrink-0 flex-col border-2 border-[#7d7d7d] bg-[#efefef]">
        <div className="flex h-[29px] shrink-0 border-b-2 border-[#8c8c8c] bg-[linear-gradient(#f6f7f7_0%,#eceded_50%,#d9dbdc_100%)] text-[#1c1c1c]">
          <div className="flex w-[301px] items-center border-r-2 border-[#b0b0b0] pl-[10px] pt-px">
            名称
            <svg viewBox="0 0 16 9" className="ml-[24px] h-[9px] w-[16px]">
              <path d="M8 0L16 9H0Z" fill="#222" />
            </svg>
          </div>
          <div className="flex items-center pl-[8px] pt-px">附注</div>
        </div>
        <div className="relative flex h-[811px] shrink-0 flex-col overflow-hidden pl-[2px] text-[#454545]">
          {topRows.map((r, i) => (
            <Row key={r.text} i={i}>
              <div className="flex w-[27px] items-center pl-[5px]">{r.pre}</div>
              {r.icon}
              <span className="ml-[3px] pt-[2px]">{r.text}</span>
            </Row>
          ))}
          {childRows.map(([ic, t], i) => (
            <Row key={t} i={i + 5}>
              <div className="w-[59px]" />
              <TreeBox />
              {ic}
              <span className="ml-[3px] pt-px tracking-[0.300px]">{t}</span>
            </Row>
          ))}
          {Array.from({ length: 18 }, (_, i) => (
            <Row key={i} i={i + 9} />
          ))}
          <svg viewBox="0 0 120 270" className="absolute left-0 top-0 h-[270px] w-[120px]" stroke="#9a9a9a" strokeWidth="1.200" strokeDasharray="1.500 1.500" fill="none">
            <path d="M14 15V37M14 53V67M14 83V126M14 15H28M23 44H28M23 74H28M14 105H28M23 135H28M43 150V255M43 165H57M43 195H57M43 225H57M43 255H57" />
          </svg>
        </div>
        <div className="ml-[27px] mt-[9px] h-[3px] w-[297px] bg-[#888]" />
      </div>
      <div className="flex h-[19px] shrink-0 items-center justify-between">
        <div className="h-[2px] w-[158px] bg-[#c4c4c4]" />
        <div className="h-[9px] w-[69px] border-b-2 border-r-2 border-[#999] bg-[#d4d4d4]" />
        <div className="h-[2px] w-[158px] bg-[#c4c4c4]" />
      </div>
      <SectionHead text="相依性" className="h-[34px] w-[399px]" />
      <SectionHead text="细节" className="h-[35px] w-[399px]" />
      <SectionHead text="预览" className="h-[34px] w-[399px]" />
    </div>
  );
}

/* ---------- 3D viewport ---------- */

function Axes() {
  const tan = '#d6c8a0';
  return (
    <g fill="none" strokeWidth="1.800">
      <path d="M1425 667L1433 728L1539 618M1488 602L1496 663L1573 711L1510 774M1433 728L1569 808M1504 719L1510 774" stroke={tan} />
      <path d="M1418 624L1425 672" stroke="#3a3ac8" />
      <path d="M1425 667L1488.500 602V608" stroke="#5a40c0" />
      <path d="M1425 667L1503.500 713.500V719" stroke="#2222d8" strokeDasharray="4 1.500" />
      <path d="M1418 607L1423.500 624Q1419 627 1414 624Z" fill="#0a0a9a" />
      <path d="M1557 600L1551 616Q1545 619 1540 611Z" fill="#f4f4f4" />
      <path d="M1551 616Q1545 619 1540 611L1545 612Z" fill="#777" />
      <path d="M1588 822L1567 817Q1566 809 1571 806Z" fill="#f4f4f4" />
      <path d="M1588 822L1567 817L1566 813Z" fill="#777" />
      <g fontFamily="Open Sans" fontSize="20" textAnchor="middle">
        <text x="1417" y="609" fill="#1414d8" stroke="#1414d8" strokeWidth="0.500" textLength="10" lengthAdjust="spacingAndGlyphs">Z</text>
        <text x="1564" y="601" fill="#dcc68e">Y</text>
        <text x="1595" y="834" fill="#dcc68e">X</text>
      </g>
    </g>
  );
}

function Viewport() {
  return (
    <div className="min-w-0 flex-1 bg-[#d3d4d5]">
      <svg viewBox="478 178 1682 1050" className="block h-[1050px] w-[1682px]" fill="none">
        <path d="M900 643L1208.500 327L1243.500 320L900 685Z" fill="#ff9c00" />
        <path d="M951 591L1208.500 327L1243.500 320" stroke="#555" strokeWidth="1.500" />
        <path d="M900 594L1646.500 1043L1652 1100L900 650Z" fill="#844e00" />
        <path d="M1646.500 1043L1941 741L1948 797L1652 1100Z" fill="#b26b00" />
        <path d="M930 647L1243.500 320L1941 741L1646.500 1043L930 612Z" fill="#ffd564" />
        <path d="M930 648L1243.500 321M1941 742L1646.500 1043" stroke="#f7a048" strokeWidth="4.500" />
        <path d="M930 612L1646.500 1042M1243.500 320L1941 741" stroke="#e8a055" strokeWidth="4" />
        <path d="M930 612L1646.500 1042M1243.500 320L1941 741" stroke="#94a04c" strokeWidth="1.800" />
        <path d="M1646.500 1043L1652 1100M1941 741L1948 797" stroke="#333" strokeWidth="1.500" />
        <path d="M930 668L1652 1100L1948 797" stroke="#5666f4" strokeWidth="3" />
        <Axes />

        <path d="M1938 740L1933.500 687Q1929 688 1926 684Q1928 673 1932 662Q1937 672 1940 684Q1939 687 1936.500 687L1943 740Z" fill="#75683a" />
        <path d="M1938 738L2003 674L2000 669L2022 657.500L2011 678L2007 677L1944 742Z" fill="#bba75a" />
        <path d="M2000 669L2011 678L2004 679Z" fill="#5f5428" />
        <path d="M1944 738L2020 782L2025 779L2040 799L2015 792L2016 788L1941 743Z" fill="#b8a456" />
        <path d="M1941 743L2016 788L2015 792L2040 799L2019 787Z" fill="#8c7b3c" />
        <circle cx="1941" cy="740" r="6.500" fill="#8a7a3c" />
        <circle cx="1940" cy="739" r="4.500" fill="#b3a055" />
        <g fill="#b5a266" fontFamily="Open Sans" fontSize="20" textAnchor="middle">
          <text x="1937" y="658" textLength="9" lengthAdjust="spacingAndGlyphs">Z</text>
          <text x="2033" y="653" textLength="11" lengthAdjust="spacingAndGlyphs">Y</text>
          <text x="2053" y="805" textLength="10" lengthAdjust="spacingAndGlyphs">X</text>
        </g>

        <path d="M583.500 1095L610 1112L613 1133L592 1153L565 1136L564 1118Z" fill="#bfc0bf" fillOpacity="0.500" />
        <path d="M583.500 1095L564 1118L565 1121L589 1134L611 1111L583.500 1095L586 1116L613 1133L592 1153L589 1134M611 1111L613 1133M586 1116L565 1136" stroke="#adadad" strokeWidth="1.400" />
        <path d="M567 1136L594 1110L591 1107L602 1101L598 1111L595 1110L570 1137Z" fill="#9cc8a0" />
        <path d="M562 1136L560 1114L557 1113L561 1104L566 1113L563.500 1114L566 1136Z" fill="#0a2a9c" />
        <circle cx="564" cy="1139" r="6" fill="#a4a4a4" />
        <circle cx="563" cy="1137" r="3.500" fill="#e6e6e6" />
        <path d="M569 1140L596 1156L599 1155L610 1166L595 1162L596 1160L569 1143Z" fill="#d82828" stroke="#d82828" strokeWidth="1.400" />
        <g fontFamily="Open Sans" fontSize="18" textAnchor="middle">
          <text x="559" y="1105" fill="#3058e8">Z</text>
          <text x="605" y="1103" fill="#3a9a4a">Y</text>
          <text x="616" y="1177" fill="#d84040">X</text>
        </g>
      </svg>
    </div>
  );
}

/* ---------- create sketch dialog ---------- */

function DlgBtn({ className, children }: Kids) {
  return (
    <div
      className={`flex shrink-0 items-center justify-center rounded-[5px] border-2 border-[#7b7b7b] bg-[linear-gradient(#f2f2f3_0%,#d8d9da_50%,#c3c5c7_51%,#f4f4f4_100%)] shadow-[0_1px_0_#f5f5f5] ${className}`}
    >
      {children}
    </div>
  );
}

function ReverseIcon() {
  return (
    <Ico className="h-[26px] w-[26px]" box="0 0 26 26">
      <path d="M4 5L23 21" stroke="#222" strokeWidth="1.900" />
      <path d="M5 23L11 16.500M16 10.500L22 4" stroke="#0a0aa0" strokeWidth="2.600" strokeDasharray="6 1.500" />
      <path d="M24 2L22.500 9.500L16.500 4ZM4 25L5 17.500L11 22.500Z" fill="#0a0aa0" />
    </Ico>
  );
}

function DBody({ className, children }: Kids) {
  return (
    <div className={`flex shrink-0 flex-col border-x-2 border-[#a2a2a2] bg-[#d3d3d3] shadow-[inset_0_3px_3px_#bcbcbc] ${className}`}>
      {children}
    </div>
  );
}

function Box({ on, text }: { on?: boolean; text: string }) {
  return (
    <div className="flex h-[33px] items-center whitespace-nowrap">
      <div
        className={`mr-[2px] flex h-[24px] w-[24px] items-center justify-center rounded-[3px] border-2 ${
          on
            ? 'border-[#60707e] border-t-[#2a62b0] bg-linear-to-b from-[#dfeaf8] via-[#9fcdf0] to-[#58e4fa]'
            : 'border-[#858585] bg-[linear-gradient(#e6e6e6,#c6c7c9_50%,#f4f4f4)]'
        }`}
      >
        {on && (
          <svg viewBox="0 0 18 16" className="h-[16px] w-[18px]">
            <path d="M1 5L3 4L7 8L16 0V7L7 16L1 10Z" fill="#0b4aa0" />
          </svg>
        )}
      </div>
      {text}
    </div>
  );
}

function TitleIcon({ red, children }: Kids & { red?: boolean }) {
  return (
    <div
      className={`flex h-[26px] w-[26px] items-center justify-center rounded-[4px] border ${
        red ? 'border-[#b0574a] bg-linear-to-b from-[#f09a88] to-[#e2401f]' : 'border-[#707070] bg-linear-to-b from-[#6c6c6e] to-[#3a3a3c]'
      }`}
    >
      <svg viewBox="0 0 22 22" className="h-[22px] w-[22px]" fill="none" stroke="#fff" strokeWidth="3">
        {children}
      </svg>
    </div>
  );
}

function Dialog() {
  return (
    <div className="absolute left-[476px] top-[237px] flex h-[827px] w-[476px] flex-col text-[18px] leading-none text-[#111]">
      <div className="flex h-[36px] shrink-0 items-center rounded-t-[8px] border-t-2 border-black bg-[linear-gradient(#8a8a8c_0,#48484a_12px,#1c1c1c_12px,#1c1c1c_100%)] pl-[13px] pr-[6px] text-[#e8e8e8]">
        <span className="pt-[4px]">创建草图</span>
        <div className="ml-auto flex gap-[6px]">
          <TitleIcon>
            <path d="M12 4Q18 6 16.500 11.500Q13 17 5 15" strokeWidth="3.800" />
          </TitleIcon>
          <TitleIcon>
            <circle cx="11" cy="11" r="5.500" strokeWidth="2.600" />
            <circle cx="11" cy="11" r="8.300" strokeWidth="2.600" strokeDasharray="3 3.500" />
            <circle cx="11" cy="11" r="1.500" fill="#fff" stroke="none" />
          </TitleIcon>
          <TitleIcon red>
            <path d="M4 4L18 18M18 4L4 18" />
          </TitleIcon>
        </div>
      </div>
      <div className="flex min-h-0 flex-1 flex-col border-x-2 border-[#9a9a9a] bg-[#ebebeb] pl-[8px] pr-[6px] pt-[6px]">
        <SectionHead text="类型" up className="h-[35px]" />
        <DBody className="h-[62px]">
          <div className="ml-[11px] mt-[9px] flex h-[36px] w-[430px] rounded-[5px] border-2 border-t-[3px] border-[#777] bg-[#0078d7]">
            <div className="flex flex-1 items-center border-2 border-dotted border-[#e0902a] pl-[2px] text-[#eaf4ff]">
              <Ico className="mr-[6px] h-[22px] w-[24px]" box="0 0 24 22">
                <path d="M6 6L21 2V16L18 21L5 18Z" fill="#eef2e0" stroke="#1a4a28" strokeWidth="1.400" />
                <path d="M1 2L5 1L17 12L18 17L13 15L2 6Z" fill="#f6c030" stroke="#6a4800" />
                <path d="M0 2L4 0L7 4L3 7Z" fill="#e03030" />
              </Ico>
              在平面上
            </div>
            <DropBtn />
          </div>
        </DBody>
        <SectionHead text="草图平面" up className="h-[35px]" />
        <DBody className="h-[146px]">
          <div className="mt-[6px] flex h-[34px] items-end pl-[9px] pr-[14px]">
            <span className="pb-[5px]">平面方法</span>
            <Combo text="自动判断" className="ml-auto mt-[2px] h-[33px] w-[193px] self-start *:first:pl-[5px]" />
          </div>
          <div className="mt-[5px] flex h-[48px] items-center pl-[9px] pr-[13px]">
            <div className="flex h-[47px] flex-1 items-center rounded-l-[8px] bg-[linear-gradient(90deg,#e0a870_0%,#e0a870_25%,#d3d3d3_95%)] pl-[4px]">
              <Check />
              <span className="ml-[8px] pt-px tracking-[0.100px]">选择平的面或平面 (1)</span>
            </div>
            <div className="flex h-[45px] w-[45px] items-center justify-center rounded-[5px] border-2 border-[#7a6f66] bg-[linear-gradient(#ffe0c8,#f98d4c_50%,#fcc59c)]">
              <Ico className="h-[34px] w-[34px]">
                <path d="M17 1V33M1 17H33" stroke="#222" strokeWidth="2" />
                <circle cx="17" cy="17" r="9" stroke="#f02010" strokeWidth="2.200" />
              </Ico>
            </div>
          </div>
          <div className="mt-[3px] flex h-[36px] items-center pl-[9px] pr-[13px]">
            <span>反向</span>
            <DlgBtn className="ml-auto h-[34px] w-[34px]">
              <ReverseIcon />
            </DlgBtn>
          </div>
        </DBody>
        <SectionHead text="草图方向" up className="h-[35px]" />
        <DBody className="h-[146px]">
          <div className="mt-[5px] flex h-[34px] items-end pl-[9px] pr-[14px]">
            <span className="pb-[4px]">参考</span>
            <Combo text="水平" className="ml-auto mt-[3px] h-[33px] w-[193px] self-start *:first:pl-[5px]" />
          </div>
          <div className="mt-[6px] flex h-[48px] items-center pl-[13px] pr-[14px]">
            <Check />
            <span className="ml-[8px] tracking-[0.100px]">选择参考 (1)</span>
            <DlgBtn className="ml-auto h-[44px] w-[44px]">
              <Ico className="h-[32px] w-[34px]" box="0 0 34 32">
                <path d="M1 8L20 9V31L2 25Z" fill="#6f9cff" />
                <path d="M20 9L32 3V24L20 31Z" fill="#1a48e0" />
                <path d="M1 8L12 2L32 3L20 9Z" fill="#a8c4ff" />
                <path d="M1 7L20 9" stroke="#d01c28" strokeWidth="2.400" />
                <path d="M1 12H10V10L17 15L9 18V16L1 14Z" fill="#f08018" />
              </Ico>
            </DlgBtn>
          </div>
          <div className="mt-[4px] flex h-[36px] items-center pl-[9px] pr-[13px]">
            <span>反向</span>
            <DlgBtn className="ml-auto h-[34px] w-[34px]">
              <ReverseIcon />
            </DlgBtn>
          </div>
        </DBody>
        <SectionHead text="草图原点" up className="h-[35px]" />
        <DBody className="h-[71px]">
          <div className="flex h-[65px] items-center pl-[13px] pr-[13px]">
            <Check />
            <span className="ml-[8px]">指定点</span>
            <DlgBtn className="ml-auto h-[33px] w-[33px]">
              <Ico className="h-[27px] w-[27px]" box="0 0 27 27">
                <path d="M17 2V15M10 8H24" stroke="#111" strokeWidth="1.900" />
                <path d="M4 13Q4 20 9 20" stroke="#f08018" strokeWidth="3.600" />
                <path d="M8 15L15 20L8 24Z" fill="#f08018" />
                <path d="M15 24H25" stroke="#111" strokeWidth="2.600" strokeDasharray="2.400 1.400" />
              </Ico>
            </DlgBtn>
            <div className="ml-[6px] flex h-[44px] w-[70px] overflow-hidden rounded-[5px] border-2 border-[#777] bg-[linear-gradient(#f0f0f1_0%,#dadbdc_50%,#c6c8ca_51%,#f4f4f4_100%)]">
              <div className="flex flex-1 items-center justify-center">
                <Ico className="h-[30px] w-[30px]" box="0 0 30 30">
                  <path d="M2 28L25 6" stroke="#222" strokeWidth="2" />
                  <circle cx="25" cy="6" r="4" fill="#e01818" />
                </Ico>
              </div>
              <div className="h-full w-[23px] *:first:w-[23px]">
                <DropBtn />
              </div>
            </div>
          </div>
        </DBody>
        <SectionHead text="设置" up className="h-[35px]" />
        <DBody className="h-[119px]">
          <div className="flex flex-col pl-[10px] pt-[6px]">
            <Box on text="创建中间基准 CSYS" />
            <Box on text="关联原点" />
            <Box text="投影工作部件原点" />
          </div>
        </DBody>
        <div className="mt-[4px] h-[2px] shrink-0 bg-[#b8b8b8]" />
        <div className="mt-[7px] flex justify-end gap-[10px] pr-[17px]">
          <div className="flex h-[32px] w-[97px] items-center justify-center rounded-[5px] border-2 border-[#58754c] border-t-[#2c7c2c] bg-[linear-gradient(#d0f2b8_0%,#9fdc84_45%,#62bc48_55%,#b6f69a_100%)]">
            确定
          </div>
          <DlgBtn className="h-[32px] w-[97px]">取消</DlgBtn>
        </div>
      </div>
      <div className="h-[13px] shrink-0 rounded-b-[8px] border-t-2 border-[#444] bg-[#191919]" />
    </div>
  );
}

/* ---------- bottom bars ---------- */

function SelectionBar() {
  const s = 'w-[25px] h-[25px]';
  return (
    <div className="flex h-[46px] shrink-0 items-center border-b-2 border-[#bdbdbd] border-t-[#555] border-t bg-[linear-gradient(#aeaeae_0,#c8c8c8_8px,#d8d8d8_100%)] pl-[8px] text-[18px] leading-none text-[#111]">
      <Combo text="没有选择过滤器" className="h-[29px] w-[214px]" />
      <Combo text="整个装配" className="ml-[11px] h-[29px] w-[228px]" />
      <Cell w="w-[46px]" dim>
        <Ico className={s} box="0 0 26 26">
          <path d="M2 7L8 3L14 7V20L8 24L2 20Z" fill="#777" stroke="#444" />
          <path d="M4 11H12M4 15H12" stroke="#a02020" strokeWidth="1.500" />
          <circle cx="19" cy="6" r="4" stroke="#6a6a3a" strokeWidth="2" />
          <circle cx="19" cy="14" r="4" stroke="#6a6a3a" strokeWidth="2" />
        </Ico>
      </Cell>
      <Sep w="w-[4px]" />
      <Cell w="w-[32px]">
        <Ico className={s} box="0 0 26 26">
          <path d="M1.500 1.500H24.500V24.500H1.500Z" fill="#f0d8d8" stroke="#d84848" strokeWidth="1.800" />
          <path d="M10 3V17M3 10H17" stroke="#222" strokeWidth="1.500" />
          <circle cx="10" cy="10" r="4" stroke="#c02020" strokeWidth="1.500" />
          <path d="M11 11H24L19 17V23L16 20V17Z" fill="#ffd21e" stroke="#b08000" strokeWidth="0.800" />
        </Ico>
      </Cell>
      <Arrow w="w-[10px]" />
      <Cell w="w-[40px]" dim>
        <Ico className={s} box="0 0 26 26">
          <path d="M20 6Q22 17 11 17" stroke="#2f7562" strokeWidth="4" />
          <path d="M5 17L12 11V23Z" fill="#2f7562" />
        </Ico>
      </Cell>
      <Cell w="w-[33px]">
        <Ico className={s} box="0 0 26 26">
          <path d="M1 17L8 3L17 6L15 22L7 23Z" fill="#e2e8f4" stroke="#3a4a6a" strokeWidth="1.400" />
          <path d="M8 3L16 2L24 8L24 18L15 22L17 9Z" fill="#c2cad8" stroke="#222" strokeWidth="1.500" />
          <path d="M7 8L14 13" stroke="#e02020" strokeWidth="2.400" />
        </Ico>
      </Cell>
      <Cell w="w-[36px]">
        <Ico className={s} box="0 0 26 26">
          <path d="M3 8Q5 1 10 3Q13 6 10 9" stroke="#0c0c50" strokeWidth="2.400" />
          <path d="M0 3L7 9L1 11Z" fill="#0c0c50" />
          <path d="M16.500 8V26M8 17H25" stroke="#111" strokeWidth="1.600" />
          <circle cx="16.500" cy="17" r="5" stroke="#e01818" strokeWidth="2" />
        </Ico>
      </Cell>
      <Sep w="w-[8px]" />
      <Cell w="w-[34px]" dim>
        <Ico className={s} box="0 0 26 26">
          <path d="M3 4H23V23H3Z" stroke="#222" strokeWidth="1.700" strokeDasharray="5 2.500" />
          {dot(3, 4)}{dot(23, 23)}
        </Ico>
      </Cell>
      <Arrow w="w-[20px]" />
      <Sep w="w-[8px]" />
      <Cell w="w-[36px]" dim>
        <Ico className={s} box="0 0 26 26">
          <path d="M0 3L6 7L0 11ZM15 3L18 8H12ZM15 25L18 20H12ZM4 14L9 11V17ZM26 14L21 11V17Z" fill="#333" />
          <path d="M0 16L6 20L0 24Z" fill="#902020" />
          <circle cx="15" cy="14" r="8" stroke="#444" strokeWidth="1.500" />
          <circle cx="15" cy="14" r="3" fill="#8a7a30" />
        </Ico>
      </Cell>
      <Cell w="w-[33px]" dim>
        <Ico className={s} box="0 0 26 26">
          <circle cx="10" cy="10" r="7.500" stroke="#444" strokeWidth="1.500" />
          <path d="M10 0L13 5H7ZM10 20L13 15H7ZM0 10L5 7V13ZM20 10L15 7V13Z" fill="#333" />
          <circle cx="10" cy="10" r="3" fill="#8a7a30" />
          <path d="M23 13Q24 20 18 20.500" stroke="#2f7562" strokeWidth="3" />
          <path d="M12 20.500L19 16V25Z" fill="#2f7562" />
        </Ico>
      </Cell>
      <Cell w="w-[36px]" dim>
        <Ico className={s} box="0 0 26 26">
          <path d="M4 24L22 4" stroke="#333" strokeWidth="1.700" />
          {dot(22, 4)}
        </Ico>
      </Cell>
      <Cell w="w-[34px]" dim>
        <Ico className={s} box="0 0 26 26">
          <path d="M3 24L23 3" stroke="#333" strokeWidth="1.700" />
          {dot(13, 13)}
        </Ico>
      </Cell>
      <Cell w="w-[32px]" dim>
        <Ico className={s} box="0 0 26 26">
          <path d="M3 3Q11 2 11 10Q12 23 22 23" stroke="#333" strokeWidth="1.700" />
          {dot(12, 14)}
        </Ico>
      </Cell>
      <Cell w="w-[38px]" dim>
        <Ico className={s} box="0 0 26 26">
          <path d="M1 18Q13 2 25 18M13 1V25" stroke="#333" strokeWidth="1.700" />
          {dot(13, 11)}
        </Ico>
      </Cell>
      <Cell w="w-[32px]" dim>
        <Ico className={s} box="0 0 26 26">
          <circle cx="13" cy="13" r="10.500" stroke="#333" strokeWidth="1.700" />
          {dot(13, 13)}
        </Ico>
      </Cell>
      <Cell w="w-[34px]" dim>
        <Ico className={s} box="0 0 26 26">
          <circle cx="13" cy="13" r="9.500" stroke="#333" strokeWidth="1.700" />
          {dot(13, 3)}{dot(13, 23)}{dot(3, 13)}{dot(23, 13)}
        </Ico>
      </Cell>
      <Cell w="w-[36px]" dim>
        <Ico className={s} box="0 0 26 26">
          <path d="M4 13H22M13 4V22" stroke="#333" strokeWidth="1.700" />
          {dot(13, 13)}
        </Ico>
      </Cell>
      <Cell w="w-[34px]" dim>
        <Ico className={s} box="0 0 26 26">
          <path d="M3 24L23 3" stroke="#333" strokeWidth="1.700" />
          {dot(8, 19)}
        </Ico>
      </Cell>
      <Cell w="w-[32px]" dim>
        <Ico className={s} box="0 0 26 26">
          <path d="M2 9Q9 0 24 4Q15 12 19 21L8 24Q0 18 2 9Z" fill="#39456a" />
          <path d="M24 4Q15 12 19 21L24 17Z" fill="#e6e6e6" />
          {dot(14, 10)}
        </Ico>
      </Cell>
      <Sep w="w-[14px]" />
      <Cell w="w-[28px]">
        <BlueCube edges className="h-[25px] w-[25px]" />
      </Cell>
      <div className="ml-auto pr-[9px] pt-[22px]">
        <svg viewBox="0 0 8 5" className="h-[5px] w-[8px]">
          <path d="M0 0H8L4 5Z" fill="#000" />
        </svg>
      </div>
    </div>
  );
}

function StatusBar() {
  return (
    <div className="flex flex-1 items-center border-b-2 border-[#9a9a9a] bg-[#d8d8d8] text-[18.500px] font-bold leading-none text-black">
      <div className="w-[1008px] pl-[4px] pt-px tracking-[1.050px]">选择对象作为草图平面或双击要定向的轴</div>
      <div className="h-full w-[2px] border-l border-[#b0b0b0] bg-white" />
      <div className="ml-auto flex h-full items-center">
        <div className="h-full w-[24px] border-l-2 border-[#c2c2c2]" />
        <div className="h-full w-[62px] border-x-2 border-[#c2c2c2]" />
        <Ico className="ml-[5px] mr-[30px] h-[18px] w-[20px]" box="0 0 20 18">
          <path d="M4 4H16V14H4Z" fill="#8ab4f0" stroke="#2a5098" strokeWidth="1.600" />
          <path d="M1 5V1H5M15 1H19V5M19 13V17H15M5 17H1V13" stroke="#444" strokeWidth="1.600" />
        </Ico>
      </div>
    </div>
  );
}

/* ---------- page ---------- */

function Mark({ className }: { className: string }) {
  return <div className={`absolute rounded-[3px] border-[5px] border-[#fd5464] ${className}`} />;
}

export default function App() {
  return (
    <div className="relative flex h-[1308px] w-[2160px] flex-col overflow-hidden bg-[#d8d8d8] font-['Noto_Sans','Noto_Sans_CJK_SC',sans-serif]">
      <TitleBar />
      <MenuBar />
      <div className="h-[103px] shrink-0 border-b-2 border-[#a8a8a8] bg-linear-to-b from-[#dfdfdf] to-[#cacaca]">
        <Toolbar1 />
        <Toolbar2 />
      </div>
      <div className="flex h-[1050px] shrink-0">
        <Tabs />
        <Navigator />
        <Viewport />
      </div>
      <SelectionBar />
      <StatusBar />
      <Dialog />
      <Mark className="left-[1511px] top-[567px] h-[61px] w-[91px]" />
      <Mark className="left-[1984px] top-[752px] h-[77px] w-[111px]" />
      <Mark className="left-[879px] top-[634px] h-[53px] w-[53px]" />
      <Mark className="left-[479px] top-[685px] h-[43px] w-[81px]" />
      <Mark className="left-[482px] top-[947px] h-[43px] w-[204px]" />
      <Mark className="left-[225px] top-[1224px] h-[50px] w-[101px]" />
    </div>
  );
}
